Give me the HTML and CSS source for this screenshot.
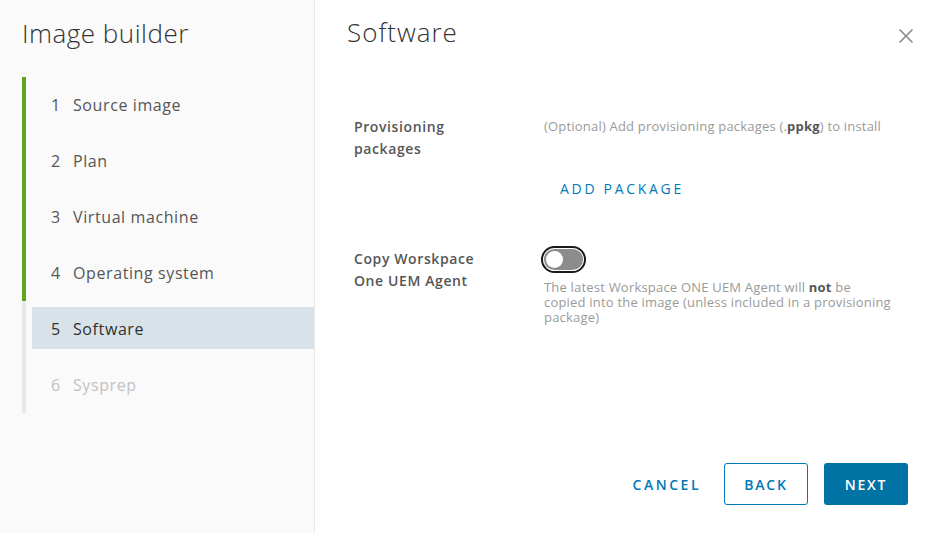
FILE: index.html
```html
<!DOCTYPE html>
<html>
<head>
<meta charset="utf-8">
<link rel="stylesheet" href="styles.css">
</head>
<body>
<div class="wizard">
  <aside class="sidebar">
    <h1 class="side-title">Image builder</h1>
    <ol class="steps">
      <li class="step done"><span class="num">1</span><span class="lbl">Source image</span></li>
      <li class="step done"><span class="num">2</span><span class="lbl">Plan</span></li>
      <li class="step done"><span class="num">3</span><span class="lbl">Virtual machine</span></li>
      <li class="step done"><span class="num">4</span><span class="lbl">Operating system</span></li>
      <li class="step current"><span class="num">5</span><span class="lbl">Software</span></li>
      <li class="step todo"><span class="num">6</span><span class="lbl">Sysprep</span></li>
    </ol>
  </aside>
  <main class="main">
    <header class="main-head">
      <h2 class="main-title">Software</h2>
      <button class="close" aria-label="Close">
        <svg width="16" height="16" viewBox="0 0 16 16"><path d="M1.5 1.5 L14.5 14.5 M14.5 1.5 L1.5 14.5" stroke="#8a8a8a" stroke-width="1.6" fill="none"/></svg>
      </button>
    </header>
    <section class="form">
      <div class="row">
        <div class="label">Provisioning packages</div>
        <div class="control">
          <p class="hint">(Optional) Add provisioning packages (.<b>ppkg</b>) to install</p>
          <button class="link-btn">ADD PACKAGE</button>
        </div>
      </div>
      <div class="row row2">
        <div class="label">Copy Worskpace One UEM Agent</div>
        <div class="control">
          <span class="toggle"><span class="knob"></span></span>
          <p class="hint small">The latest Workspace ONE UEM Agent will <b>not</b> be copied into the image (unless included in a provisioning package)</p>
        </div>
      </div>
    </section>
    <footer class="actions">
      <button class="btn flat">CANCEL</button>
      <button class="btn outline">BACK</button>
      <button class="btn primary">NEXT</button>
    </footer>
  </main>
</div>
</body>
</html>
```
FILE: styles.css
```css
* { box-sizing: border-box; }
html, body { margin: 0; padding: 0; }
body {
  font-family: "Open Sans", "Noto Sans", sans-serif;
  color: #565656;
  background: #fff;
}
.wizard {
  display: flex;
  width: 934px;
  height: 533px;
}
.sidebar {
  width: 315px;
  flex: none;
  background: #fafafa;
  border-right: 1px solid #e8e8e8;
  padding: 16px 0 0 22px;
}
.side-title {
  margin: 0;
  font-size: 26px;
  font-weight: 300;
  color: #333;
  line-height: 34px;
  letter-spacing: 0.5px;
}
.steps {
  list-style: none;
  margin: 27px 0 0 0;
  padding: 0;
}
.step {
  display: flex;
  align-items: center;
  height: 56px;
  border-left: 4px solid #e8e8e8;
  font-size: 16px;
  letter-spacing: 0.6px;
  color: #565656;
}
.step.done { border-left-color: #62a420; }
.step .num { width: 22px; margin-left: 25px; }
.step.current {
  background: linear-gradient(#fafafa 0 6px, #d8e3e9 6px 48px, #fafafa 48px);
  color: #313131;
  position: relative;
}
.step.current::before {
  content: "";
  position: absolute;
  left: 0; top: 0; width: 6px; height: 56px;
  background: #fafafa;
}
.step.todo { color: #c2c2c2; }
.main {
  flex: 1;
  display: flex;
  flex-direction: column;
  padding: 15px 26px 28px 32px;
}
.main-head {
  display: flex;
  justify-content: space-between;
  align-items: flex-start;
}
.main-title {
  margin: 0;
  font-size: 26px;
  font-weight: 300;
  color: #333;
  line-height: 34px;
  letter-spacing: 1px;
}
.close {
  border: 0;
  background: none;
  padding: 0;
  margin: 13px -6px 0 0;
  width: 16px;
  height: 16px;
  line-height: 0;
}
.form {
  padding: 67px 0 0 7px;
}
.row {
  display: flex;
}
.label {
  width: 190px;
  font-size: 14px;
  font-weight: 600;
  line-height: 22px;
  letter-spacing: 0.6px;
  color: #565656;
  padding-right: 40px;
}
.control { flex: 1; }
.hint {
  margin: 3px 0 0 0;
  font-size: 13px;
  letter-spacing: 0.2px;
  color: #9a9a9a;
  line-height: 15px;
}
.hint b { font-weight: 700; color: #565656; }
.link-btn {
  border: 0;
  background: none;
  color: #0079b8;
  font-family: inherit;
  font-size: 14px;
  font-weight: 500;
  letter-spacing: 2.7px;
  padding: 0;
  margin: 45px 0 0 16px;
}
.row2 { margin-top: 49px; }
.toggle {
  display: block;
  width: 45px;
  height: 27px;
  border-radius: 14px;
  border: 2px solid #1a1a1a;
  margin: -2px 0 0 -3px;
  position: relative;
}
.toggle::before {
  content: "";
  position: absolute;
  inset: 1px;
  border-radius: 12px;
  background: #8c8c8c;
}
.knob {
  position: absolute;
  left: 3px; top: 3px;
  width: 17px; height: 17px;
  border-radius: 50%;
  background: #fff;
}
.hint.small { margin-top: 7px; width: 350px; }
.actions {
  margin-top: auto;
  display: flex;
  justify-content: flex-end;
  gap: 16px;
}
.btn {
  height: 42px;
  padding: 0;
  font-family: inherit;
  font-size: 14px;
  font-weight: 600;
  letter-spacing: 1.8px;
  border-radius: 3px;
  border: 1px solid transparent;
  background: none;
  color: #0079b8;
}
.btn.flat { padding: 0 6px 0 8px; letter-spacing: 2.5px; }
.btn.outline { border-color: #0079b8; width: 84px; }
.btn.primary { background: #0072a3; color: #fff; width: 84px; }
```
